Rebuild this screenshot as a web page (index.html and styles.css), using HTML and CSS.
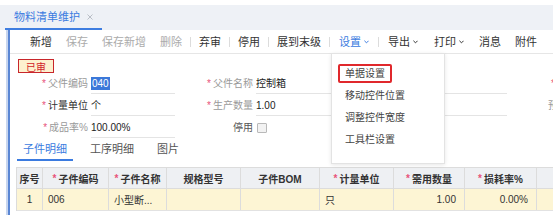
FILE: index.html
```html
<!DOCTYPE html>
<html lang="zh-CN">
<head>
<meta charset="utf-8">
<title>物料清单维护</title>
<link rel="stylesheet" href="styles.css">
</head>
<body>
<div class="top-gap"></div>
<div class="tabbar">
  <div class="tab">
    <span class="tab-title">物料清单维护</span>
    <svg class="tab-close" viewBox="0 0 6 6"><path d="M0.5 0.5L5.5 5.5M5.5 0.5L0.5 5.5" stroke="#b9bec6" stroke-width="1" fill="none"/></svg>
  </div>
</div>
<div class="frame">
  <div class="content">
    <div class="toolbar">
      <span class="btn">新增</span>
      <span class="btn off">保存</span>
      <span class="btn off">保存新增</span>
      <span class="btn off">删除</span>
      <span class="sep"></span>
      <span class="btn">弃审</span>
      <span class="sep"></span>
      <span class="btn">停用</span>
      <span class="sep"></span>
      <span class="btn">展到末级</span>
      <span class="sep"></span>
      <span class="btn dd active">设置<svg class="chev" viewBox="0 0 6 4"><path d="M0.5 0.5L3 3L5.5 0.5" stroke="currentColor" stroke-width="1.2" fill="none"/></svg></span>
      <span class="sep"></span>
      <span class="btn dd">导出<svg class="chev" viewBox="0 0 6 4"><path d="M0.5 0.5L3 3L5.5 0.5" stroke="currentColor" stroke-width="1.2" fill="none"/></svg></span>
      <span class="btn dd">打印<svg class="chev" viewBox="0 0 6 4"><path d="M0.5 0.5L3 3L5.5 0.5" stroke="currentColor" stroke-width="1.2" fill="none"/></svg></span>
      <span class="btn">消息</span>
      <span class="btn">附件</span>
      <div class="menu">
        <div class="menu-item hl"><span>单据设置</span></div>
        <div class="menu-item"><span>移动控件位置</span></div>
        <div class="menu-item"><span>调整控件宽度</span></div>
        <div class="menu-item"><span>工具栏设置</span></div>
      </div>
    </div>

    <div class="badge">已审</div>

    <div class="form">
      <div class="field">
        <label class="label muted"><i class="req">*</i>父件编码</label>
        <div class="value"><span class="sel">040</span></div>
      </div>
      <div class="field">
        <label class="label muted"><i class="req">*</i>父件名称</label>
        <div class="value">控制箱</div>
      </div>
      <div class="field">
        <label class="label edge"><i class="req">*</i>版本号</label>
      </div>

      <div class="field">
        <label class="label"><i class="req">*</i>计量单位</label>
        <div class="value">个</div>
      </div>
      <div class="field">
        <label class="label muted"><i class="req">*</i>生产数量</label>
        <div class="value">1.00</div>
      </div>
      <div class="field">
        <label class="label edge alt">预计工时</label>
      </div>

      <div class="field">
        <label class="label muted"><i class="req">*</i>成品率%</label>
        <div class="value">100.00%</div>
      </div>
      <div class="field">
        <label class="label dim">停用</label>
        <span class="checkbox"></span>
      </div>
      <div class="field"></div>
    </div>

    <div class="subtabs">
      <span class="subtab on">子件明细</span>
      <span class="subtab">工序明细</span>
      <span class="subtab">图片</span>
    </div>

    <div class="grid">
      <div class="thead">
        <div class="cell">序号</div>
        <div class="cell"><i class="req">*</i>子件编码</div>
        <div class="cell"><i class="req">*</i>子件名称</div>
        <div class="cell">规格型号</div>
        <div class="cell">子件BOM</div>
        <div class="cell"><i class="req">*</i>计量单位</div>
        <div class="cell"><i class="req">*</i>需用数量</div>
        <div class="cell"><i class="req">*</i>损耗率%</div>
        <div class="cell"></div>
      </div>
      <div class="trow">
        <div class="cell center">1</div>
        <div class="cell">006</div>
        <div class="cell">小型断...</div>
        <div class="cell"></div>
        <div class="cell"></div>
        <div class="cell">只</div>
        <div class="cell num">1.00</div>
        <div class="cell num">0.00%</div>
        <div class="cell"></div>
      </div>
    </div>
  </div>
</div>
</body>
</html>
```

FILE: styles.css
```css
html, body {
  margin: 0;
  padding: 0;
  width: 553px;
  height: 215px;
  overflow: hidden;
  background: #fff;
}
body {
  font-family: "Liberation Sans", "Noto Sans CJK SC", sans-serif;
  font-size: 10px;
  color: #333;
}
.top-gap { height: 5px; }

.tabbar {
  height: 25px;
  background: #eef1f6;
  display: flex;
  align-items: flex-end;
}
.tab {
  margin-left: 5px;
  height: 25px;
  box-sizing: border-box;
  padding: 0 9px;
  display: flex;
  align-items: center;
  gap: 7px;
  border-bottom: 2px solid #3e7de0;
}
.tab-title {
  font-size: 11px;
  line-height: 14px;
  color: #3b7be0;
}
.tab-close { width: 6px; height: 6px; }

.frame {
  margin-left: 6px;
  border-left: 2px solid #c8d6ef;
  height: 185px;
}
.content {
  border-left: 2px solid #5a86d4;
  height: 100%;
}

.toolbar {
  position: relative;
  height: 23px;
  border-bottom: 1px solid #e6e6e6;
  display: flex;
  align-items: center;
  padding-left: 13px;
}
.btn {
  margin: 0 7px;
  font-size: 11px;
  line-height: 14px;
  color: #333;
  display: flex;
  align-items: center;
  white-space: nowrap;
}
.btn.off { color: #ababab; }
.btn.dd { margin: 0 8px; }
.btn.active { color: #3b7be0; }
.chev {
  width: 5px;
  height: 4px;
  margin-left: 3px;
}
.sep {
  width: 1px;
  height: 10px;
  background: #dcdcdc;
  margin: 0 1px;
}

.menu {
  position: absolute;
  left: 321px;
  top: 23px;
  width: 114px;
  height: 111px;
  box-sizing: border-box;
  background: #fff;
  border: 1px solid #e3e3e3;
  box-shadow: 0 1px 4px rgba(0, 0, 0, 0.10);
  padding: 8px 0 0 6px;
  z-index: 5;
}
.menu-item {
  height: 22px;
  display: flex;
  align-items: center;
}
.menu-item span {
  height: 19px;
  box-sizing: border-box;
  padding: 0 5px;
  border: 2px solid transparent;
  border-radius: 2px;
  font-size: 10px;
  line-height: 15px;
  color: #444;
  display: flex;
  align-items: center;
}
.menu-item.hl span { border-color: #e0282c; }

.badge {
  margin: 5px 0 0 8px;
  width: 36px;
  height: 14px;
  box-sizing: border-box;
  border: 1px solid #c8262b;
  background: #fdf1cf;
  color: #d2232a;
  font-size: 10px;
  display: flex;
  align-items: center;
  justify-content: center;
}

.form {
  display: grid;
  grid-template-columns: 165px 332px 56px;
  grid-auto-rows: 22px;
}
.field {
  display: flex;
  align-items: center;
  min-width: 0;
  overflow: hidden;
}
.label {
  width: 78px;
  flex: none;
  text-align: right;
  font-size: 10px;
  line-height: 14px;
  color: #333;
  white-space: nowrap;
}
.label.muted { color: #9a9a9a; }
.label.dim { color: #555; }
.label.edge {
  text-align: left;
  padding-left: 44px;
  box-sizing: border-box;
  color: #9a9a9a;
}
.label.edge.alt { padding-left: 41px; }
.req {
  font-style: normal;
  color: #e8537a;
  margin-right: 2px;
}
.value {
  flex: 1;
  margin-left: 3px;
  height: 19px;
  line-height: 19px;
  border-bottom: 1px solid #e4e4e4;
  color: #222;
  white-space: nowrap;
  overflow: hidden;
}
.sel {
  background: #3b78d9;
  color: #fff;
  padding: 1px 1px;
}
.checkbox {
  margin-left: 4px;
  width: 8px;
  height: 8px;
  border: 1px solid #b9b9b9;
  background: #f2f2f2;
  border-radius: 1px;
}

.subtabs {
  display: flex;
  gap: 11px;
  margin-left: 7px;
  height: 22px;
}
.subtab {
  padding: 0 6px;
  font-size: 11px;
  line-height: 20px;
  color: #555;
}
.subtab.on {
  color: #3b7be0;
  border-bottom: 2px solid #3b7be0;
}

.grid {
  margin: 6px 0 0 6px;
  border-left: 1px solid #dcdcdc;
  width: 620px;
}
.thead, .trow {
  display: grid;
  grid-template-columns: 26px 66px 58px 74px 79px 74px 71px 72px 80px;
}
.thead {
  height: 22px;
  box-sizing: border-box;
  background: #eef0f3;
  border-top: 1px solid #dcdcdc;
  border-bottom: 1px solid #dcdcdc;
}
.trow {
  height: 22px;
  box-sizing: border-box;
  background: #fdf5d4;
  border-bottom: 1px solid #e2e2e2;
}
.cell {
  border-right: 1px solid #dcdcdc;
  display: flex;
  align-items: center;
  padding: 0 5px;
  overflow: hidden;
  white-space: nowrap;
  font-size: 10px;
  color: #333;
}
.thead .cell {
  justify-content: center;
  font-weight: bold;
  color: #333;
  padding: 0;
}
.cell.center { justify-content: center; }
.cell.num {
  justify-content: flex-end;
  padding-right: 8px;
}
```
